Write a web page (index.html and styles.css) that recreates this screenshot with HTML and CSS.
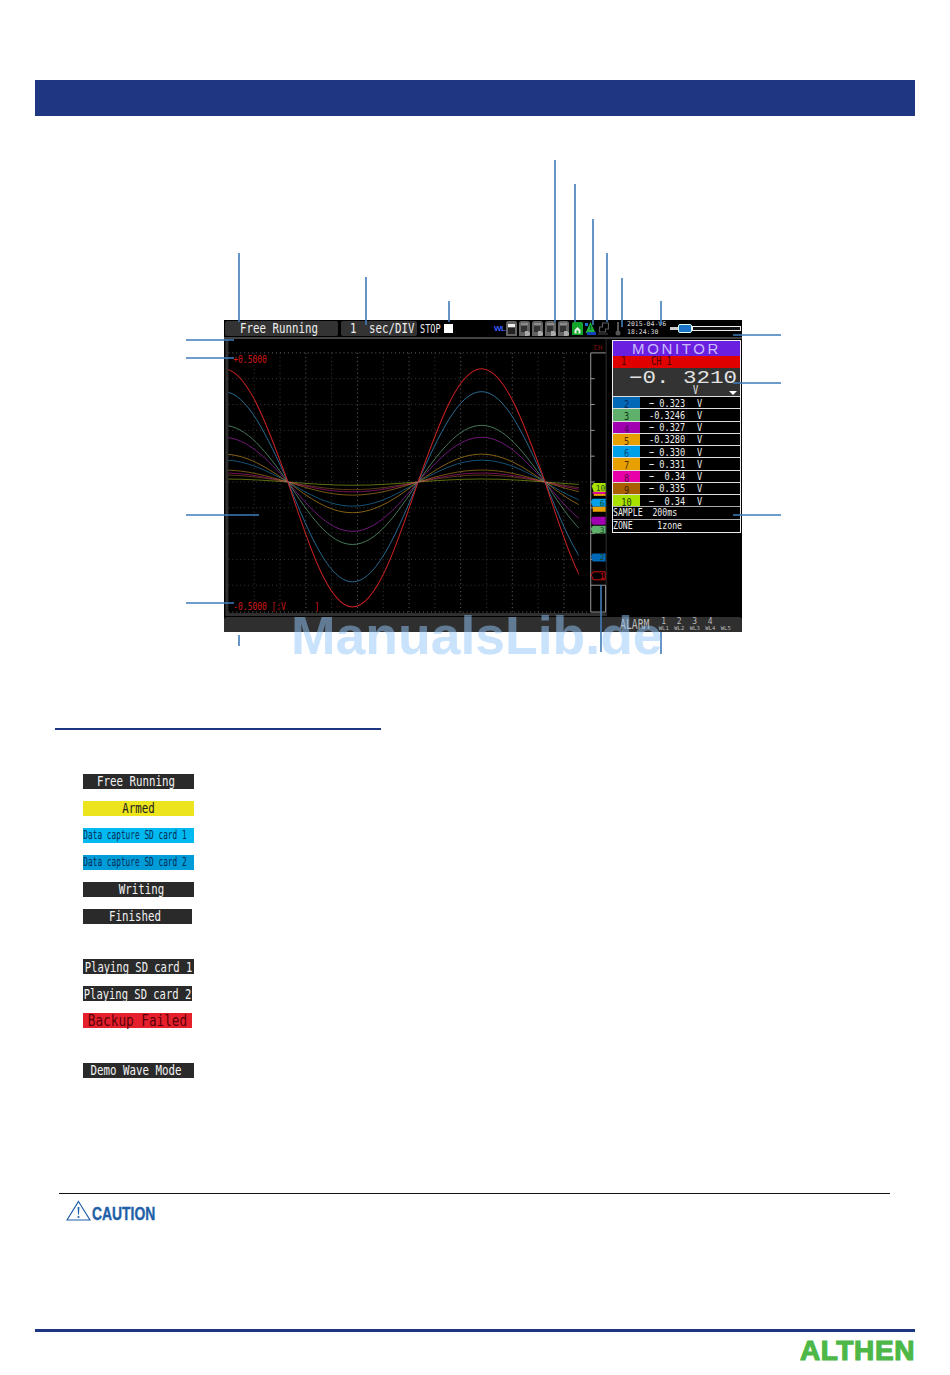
FILE: index.html
```html
<!DOCTYPE html>
<html lang="en">
<head>
<meta charset="utf-8">
<title>Monitor screen</title>
<link rel="stylesheet" href="styles.css">
</head>
<body>
<div class="page">
  <header class="title-bar"></header>

  <section class="figure">
    <div class="screen">
      <div class="topbar">
        <div class="pill pill-mode"><span class="lcd">Free Running</span></div>
        <div class="pill pill-div"><span class="lcd div-num">1</span><span class="lcd">sec/DIV</span></div>
        <span class="lcd stop">STOP</span>
        <span class="stop-box"></span>
        <div class="status">
          <span class="wl">WL</span>
          <svg class="ico" viewBox="0 0 11 15"><use href="#sd"/><rect x="2" y="3" width="7" height="3" fill="#eee"/><rect x="2" y="7" width="7" height="6" fill="#222"/></svg>
          <svg class="ico" viewBox="0 0 11 15"><use href="#sd"/><use href="#sd-mark"/></svg>
          <svg class="ico" viewBox="0 0 11 15"><use href="#sd"/><use href="#sd-mark"/></svg>
          <svg class="ico" viewBox="0 0 11 15"><use href="#sd"/><use href="#sd-mark"/></svg>
          <svg class="ico" viewBox="0 0 11 15"><use href="#sd"/><use href="#sd-mark"/></svg>
          <svg class="ico ico-gap" viewBox="0 0 11 15"><path d="M2 1h7q2 0 2 2v11H0V3q0-2 2-2z" fill="#12a52a"/><path d="M2.500 9l3-3 3 3v3.500h-6z" fill="#e8f5e8"/><rect x="4.500" y="9.500" width="2" height="3" fill="#12a52a"/></svg>
          <svg class="ico" viewBox="0 0 11 15"><rect x="0" y="2" width="3" height="3" fill="#1c6fd0"/><path d="M5.500 1L10.500 12H.5z" fill="#1fb83c"/><path d="M5.500 4v5" stroke="#063" stroke-width="1.500"/><rect x="2" y="11" width="9" height="3" fill="#1444b8"/></svg>
          <svg class="ico" viewBox="0 0 11 15"><path d="M4.500 2h6v6H7.500v3h-6V6h3z" fill="none" stroke="#5a5a5a" stroke-width="1.200"/><path d="M0 13h10" stroke="#4a4a4a"/></svg>
          <svg class="ico ico-therm" viewBox="0 0 8 15"><rect x="3" y="1" width="2" height="9" fill="#555"/><circle cx="4" cy="12" r="2.500" fill="#555"/></svg>
          <div class="clock"><span>2015-04-V6</span><span>18:24:30</span></div>
          <div class="slider"><span class="slider-tip"></span><span class="slider-knob"></span><span class="slider-track"></span></div>
        </div>
      </div>

      <div class="main">
        <svg class="chart" viewBox="224 337 384 280">
          <defs>
            <clipPath id="plot"><rect x="227" y="340" width="353" height="272"/></clipPath>
            <path id="wave" d="M222-100C245.500-100 265.800-51.230 287 0C308.200 56.600 328.500 110.500 352 110.500C375.900 110.500 396.500 56.600 418 0C438.900-51.230 458.800-100 482-100C505.200-100 525.100-51.230 546 0C567 56.600 587 110.500 611 110.500"/>
          </defs>
          <rect class="frame" x="224" y="337" width="3" height="277"/>
          <rect class="frame" x="224" y="613" width="384" height="3"/>
          <rect class="frame" x="607" y="337" width="1" height="279"/>
          <path class="grid" d="M227 377H591M227 403H591M227 429H591M227 455H591M227 481H591M227 507H591M227 533H591M227 559H591M227 585H591M253 351V612M279 351V612M331 351V612M383 351V612M435 351V612M487 351V612M539 351V612"/>
          <path class="grid-major" d="M227 351H591M227 612H591M305 351V612M357 351V612M409 351V612M461 351V612M513 351V612M565 351V612"/>
          <g class="waves" clip-path="url(#plot)">
            <use href="#wave" class="w10" transform="translate(0 481) scale(1 .03)"/>
            <use href="#wave" class="w9" transform="translate(0 481) scale(1 .07)"/>
            <use href="#wave" class="w8" transform="translate(0 481) scale(1 .09)"/>
            <use href="#wave" class="w7" transform="translate(0 481) scale(1 .12)"/>
            <use href="#wave" class="w6" transform="translate(0 481) scale(1 .22)"/>
            <use href="#wave" class="w5" transform="translate(0 481) scale(1 .28)"/>
            <use href="#wave" class="w4" transform="translate(0 481) scale(1 .45)"/>
            <use href="#wave" class="w3" transform="translate(0 481) scale(1 .57)"/>
            <use href="#wave" class="w2" transform="translate(0 481) scale(1 .91)"/>
            <use href="#wave" class="w1" transform="translate(0 481) scale(1 1.14)"/>
          </g>
          <text class="scale-text" transform="translate(232 361) scale(1 1.4)">+0.5000</text>
          <text class="scale-text" transform="translate(232 610) scale(1 1.4)">-0.5000 [:V      ]</text>
          <text class="ch-tag" x="595" y="348">CH</text>
          <path class="axis" d="M592 351V612H607M592 351H607M592 377H596M592 403H596M592 429H596M592 455H596M592 481H596M592 507H596M592 533H596M592 559H596M592 585H607V612"/>
          <path d="M593 485l2-3h12v9H595z" fill="#a8e000"/>
          <text class="tag-text" x="597" y="490">10</text>
          <rect x="594" y="491" width="13" height="2" fill="#e800a8"/>
          <rect x="595" y="493" width="12" height="2" fill="#e8a000"/>
          <path d="M592 501l2-3h13v8H594z" fill="#00a0e8"/>
          <text class="tag-text" x="601" y="505">6</text>
          <rect x="594" y="506" width="13" height="5" fill="#e8a000"/>
          <path d="M592 519l2-3h13v8H594z" fill="#a000b0"/>
          <path d="M592 528l2-3h13v8H594z" fill="#5fb06a"/>
          <text class="tag-text" x="601" y="532">3</text>
          <path d="M592 556l2-3h13v8H594z" fill="#0068b7"/>
          <text class="tag-text" x="601" y="560">2</text>
          <path d="M592.500 574.500l2-3h12v8h-12z" fill="none" stroke="#d01010"/>
          <text class="tag-red" x="601" y="579">1</text>
        </svg>

        <aside class="panel">
          <div class="monitor">MONITOR</div>
          <div class="ch-head"><span class="lcd ch-num">1</span><span class="lcd">CH 1</span></div>
          <div class="big">
            <div class="big-value">−0. 3210</div>
            <span class="lcd big-unit">V</span>
            <span class="big-arrow"></span>
          </div>
          <div class="row"><span class="cell c2"><span class="lcd">2</span></span><span class="lcd val">− 0.323</span><span class="lcd unit">V</span></div>
          <div class="row"><span class="cell c3"><span class="lcd">3</span></span><span class="lcd val">-0.3246</span><span class="lcd unit">V</span></div>
          <div class="row"><span class="cell c4"><span class="lcd">4</span></span><span class="lcd val">− 0.327</span><span class="lcd unit">V</span></div>
          <div class="row"><span class="cell c5"><span class="lcd">5</span></span><span class="lcd val">-0.3280</span><span class="lcd unit">V</span></div>
          <div class="row"><span class="cell c6"><span class="lcd">6</span></span><span class="lcd val">− 0.330</span><span class="lcd unit">V</span></div>
          <div class="row"><span class="cell c5"><span class="lcd">7</span></span><span class="lcd val">− 0.331</span><span class="lcd unit">V</span></div>
          <div class="row"><span class="cell c8"><span class="lcd">8</span></span><span class="lcd val">−  0.34</span><span class="lcd unit">V</span></div>
          <div class="row"><span class="cell c9"><span class="lcd">9</span></span><span class="lcd val">− 0.335</span><span class="lcd unit">V</span></div>
          <div class="row"><span class="cell c10"><span class="lcd">10</span></span><span class="lcd val">−  0.34</span><span class="lcd unit">V</span></div>
          <div class="info"><span class="lcd">SAMPLE  200ms</span></div>
          <div class="info"><span class="lcd">ZONE     1zone</span></div>
        </aside>
      </div>

      <div class="bottombar">
        <span class="lcd alarm">ALARM</span>
        <div class="al"><span>1</span><small>WL1</small></div>
        <div class="al"><span>2</span><small>WL2</small></div>
        <div class="al"><span>3</span><small>WL3</small></div>
        <div class="al"><span>4</span><small>WL4</small></div>
        <div class="al"><span>&nbsp;</span><small>WL5</small></div>
      </div>
    </div>
  </section>

  <div class="section-rule"></div>

  <section class="badges">
    <div class="group">
      <div class="badge dark"><span class="lcd shift-left">Free Running</span></div>
      <div class="badge yellow"><span class="lcd">Armed</span></div>
      <div class="badge cyan"><span class="lcd tiny">Data capture SD card 1</span></div>
      <div class="badge blue"><span class="lcd tiny">Data capture SD card 2</span></div>
      <div class="badge dark"><span class="lcd shift-right">Writing</span></div>
      <div class="badge dark short"><span class="lcd shift-left">Finished</span></div>
    </div>
    <div class="group">
      <div class="badge dark"><span class="lcd play">Playing SD card 1</span></div>
      <div class="badge dark short"><span class="lcd play">Playing SD card 2</span></div>
      <div class="badge red short"><span class="lcd wide">Backup Failed</span></div>
    </div>
    <div class="group">
      <div class="badge dark"><span class="lcd shift-left">Demo Wave Mode</span></div>
    </div>
  </section>

  <section class="caution">
    <svg class="caution-icon" viewBox="0 0 25 21">
      <path d="M12.500 1.500L24 20H1z" fill="none" stroke="#1f5fa8" stroke-width="1.200"/>
      <path d="M11.600 7h1.800l-.4 7.500h-1z" fill="#1f5fa8"/>
      <circle cx="12.500" cy="17" r="1.100" fill="#1f5fa8"/>
    </svg>
    <span class="caution-text">CAUTION</span>
  </section>

  <footer class="footer">
    <div class="footer-logo">ALTHEN</div>
  </footer>

  <svg class="callouts" viewBox="0 0 950 700">
    <path d="M239 253V322M366 277V325M449 301V322M555 160V322M575 184V322M593 219V325M607 253V322M622 278V327M661 301V325M239 635V646M601 585V652M661 632V654M186 340H234M186 358H234M186 515H259M186 603H234M733 335H781M733 383H781M733 515H781"/>
  </svg>

  <div class="watermark">ManualsLib.de</div>

  <svg class="defs-holder" aria-hidden="true">
    <defs>
      <path id="sd" d="M2.500 0h6q2.500 0 2.500 2.500V15H0V2.500Q0 0 2.500 0z" fill="#636363"/>
      <g id="sd-mark"><rect x="2" y="2" width="7" height="2" fill="#8c8c8c"/><rect x="2" y="5" width="6" height="6" fill="#333"/><path d="M6 10h3l2 2v2l-2 1H6z" fill="#aaa"/></g>
    </defs>
  </svg>
</div>
</body>
</html>
```

FILE: styles.css
```css
* { box-sizing: border-box; }

body {
  margin: 0;
  background: #fff;
  font-family: "Liberation Sans", Arial, sans-serif;
}

.page {
  position: relative;
  width: 950px;
  height: 1375px;
  padding: 80px 35px 0;
  overflow: hidden;
}

.title-bar {
  height: 36px;
  background: #1f3783;
}

/* LCD style text: a narrow mono face stretched vertically */
.lcd {
  display: inline-block;
  font-family: "DejaVu Sans Mono", monospace;
  font-size: 10.800px;
  line-height: 12px;
  white-space: pre;
  transform: scale(1, 1.35);
}

/* Figure */
.figure {
  height: 516px;
  padding: 204px 0 0 189px;
}

.screen {
  display: flex;
  flex-direction: column;
  width: 518px;
  height: 312px;
  background: #000;
  color: #eee;
}

.topbar {
  display: flex;
  align-items: center;
  height: 17px;
  padding-left: 1px;
}

.pill {
  display: flex;
  align-items: center;
  height: 15px;
  background: #333;
  border-radius: 2px;
}

.pill-mode { width: 113px; padding-left: 15px; }
.pill-div { width: 76px; margin-left: 3px; padding-left: 9px; }
.div-num { width: 19px; }

.stop {
  margin-left: 3px;
  font-size: 8.600px;
}

.stop-box {
  width: 9px;
  height: 9px;
  margin-left: 3px;
  background: #fff;
}

.status {
  display: flex;
  align-items: center;
  width: 248px;
  margin-left: auto;
}

.wl {
  width: 12px;
  color: #3a5cff;
  font-size: 8px;
  font-weight: bold;
  letter-spacing: -.5px;
}

.ico {
  flex: none;
  width: 11px;
  height: 15px;
  margin-right: 2px;
}

.ico-gap { margin-left: 1px; }
.ico-therm { width: 8px; margin: 0 5px 0 3px; }

.clock {
  display: flex;
  flex-direction: column;
  width: 43px;
  color: #ddd;
  font-family: "DejaVu Sans Mono", monospace;
  font-size: 6.500px;
  line-height: 7.500px;
}

.slider {
  display: flex;
  align-items: center;
  height: 9px;
}

.slider-tip {
  width: 8px;
  height: 3px;
  background: #ccc;
}

.slider-knob {
  width: 14px;
  height: 9px;
  background: #1c74c8;
  border: 1px solid #dfe;
  border-radius: 2px;
}

.slider-track {
  width: 49px;
  height: 5px;
  background: #111;
  border: 1px solid #eee;
}

.main {
  display: flex;
  flex: 1;
  min-height: 0;
  border-top: 2px solid #444;
}

.chart {
  flex: none;
  width: 384px;
  height: 278px;
}

.frame { fill: #303030; }
.grid { fill: none; stroke: #383838; stroke-dasharray: 1 3; }
.grid-major { fill: none; stroke: #666; stroke-dasharray: 1 3; }
.waves use { fill: none; stroke-width: 1; vector-effect: non-scaling-stroke; }
.waves .w1 { stroke: #c82020; }
.waves .w2 { stroke: #2a6f98; }
.waves .w3 { stroke: #5a9870; }
.waves .w4 { stroke: #9a20a8; }
.waves .w5 { stroke: #d09a20; }
.waves .w6 { stroke: #2088c0; }
.waves .w7 { stroke: #d49a20; }
.waves .w8 { stroke: #d8209a; }
.waves .w9 { stroke: #a86c30; }
.waves .w10 { stroke: #b8d820; }

.scale-text {
  fill: #d01818;
  font-family: "DejaVu Sans Mono", monospace;
  font-size: 8px;
  white-space: pre;
}

.ch-tag {
  fill: #8a1010;
  font-family: "DejaVu Sans Mono", monospace;
  font-size: 7px;
}

.axis { fill: none; stroke: #999; stroke-width: 1; }

.tag-text, .tag-red {
  font-family: "DejaVu Sans Mono", monospace;
  font-size: 8px;
  fill: #1a4a20;
}

.tag-red { fill: #d01010; }

/* Monitor panel */
.panel {
  flex: none;
  width: 129px;
  height: 193px;
  margin: 1px 0 0 4px;
  border: 1px solid #eee;
}

.monitor {
  height: 15px;
  background: #6a1fe0;
  color: #c9bcff;
  font-size: 15px;
  line-height: 15px;
  letter-spacing: 2.600px;
  text-align: center;
}

.ch-head {
  display: flex;
  height: 12px;
  padding-left: 8px;
  background: #e00000;
  color: #4a0000;
  line-height: 12px;
}

.ch-head .lcd { font-size: 8.600px; line-height: 11px; }
.ch-num { width: 30px; }

.big {
  position: relative;
  height: 28px;
  background: #333;
}

.big-value {
  display: inline-block;
  margin-left: 16px;
  color: #e2e2e2;
  font-family: "Liberation Mono", monospace;
  font-size: 18px;
  line-height: 21px;
  white-space: pre;
  transform: scaleX(1.25);
  transform-origin: left center;
}

.big-unit {
  position: absolute;
  left: 80px;
  top: 17px;
  font-size: 8.600px;
  line-height: 10px;
}

.big-arrow {
  position: absolute;
  right: 3px;
  bottom: 1px;
  border: 4px solid transparent;
  border-top-color: #fff;
  border-bottom-width: 0;
}

.row {
  display: flex;
  align-items: center;
  height: 12.250px;
  border-top: 1px solid #ddd;
}

.row .lcd, .info .lcd {
  font-size: 8.600px;
  line-height: 10px;
  transform: scale(1, 1.25);
}

.cell {
  width: 27px;
  height: 100%;
  color: #1c2a4a;
  line-height: 10px;
  text-align: center;
}

.val { width: 56px; padding-left: 9px; }
.unit { margin-left: 1px; }

.c2 { background: #0068b7; color: #042a5a; }
.c3 { background: #5fb06a; color: #0a3a10; }
.c4 { background: #a000b0; color: #500060; }
.c5 { background: #e8a000; color: #503000; }
.c6 { background: #00a0e8; color: #044a7a; }
.c8 { background: #e800a8; color: #60004a; }
.c9 { background: #a86000; color: #402000; }
.c10 { background: #a8e000; color: #204000; }

.info {
  display: flex;
  align-items: flex-start;
  height: 12.250px;
  border-top: 1px solid #aaa;
}

.info .lcd { font-size: 8.200px; }

/* Bottom bar */
.bottombar {
  display: flex;
  align-items: center;
  height: 15px;
  padding-left: 396px;
  background: #2f2f2f;
  border-radius: 3px 3px 0 0;
  color: #bbb;
}

.alarm { width: 36px; font-size: 9.800px; }

.al {
  display: flex;
  flex-direction: column;
  align-items: center;
  width: 15.500px;
  font-family: "DejaVu Sans Mono", monospace;
  font-size: 8px;
  line-height: 7px;
}

.al small { font-size: 5.500px; line-height: 7px; }

/* Section rule and status badges */
.section-rule {
  width: 326px;
  height: 2px;
  margin: 96px 0 0 20px;
  background: #1f3783;
}

.badges {
  display: flex;
  flex-direction: column;
  gap: 35px;
  margin: 44px 0 0 48px;
}

.group {
  display: flex;
  flex-direction: column;
  gap: 12px;
}

.badge {
  width: 111px;
  height: 15px;
  padding-top: 1px;
  color: #f2f2f2;
  text-align: center;
}

.badge .lcd { vertical-align: top; line-height: 14px; }

.short { width: 109px; }
.dark { background: #2a2a2a; }
.yellow { background: #ece41c; color: #222; }
.cyan { background: #00b9f0; color: #06365a; }
.blue { background: #009cd8; color: #06365a; }
.red { background: #e5202c; color: #5a0008; }

.lcd.shift-left { margin-right: 5px; }
.lcd.shift-right { margin-left: 6px; }

.lcd.tiny {
  font-size: 7.800px;
  color: #032a55;
  transform: scale(1, 1.6);
  margin-right: 7px;
}

.lcd.play { font-size: 10.500px; }
.lcd.wide { font-size: 12.700px; transform: scale(1, 1.2); }

/* Caution */
.caution {
  display: flex;
  align-items: flex-start;
  width: 831px;
  height: 136px;
  margin: 115px 0 0 24px;
  padding: 6px 0 0 7px;
  border-top: 1px solid #111;
}

.caution-icon {
  flex: none;
  width: 25px;
  height: 21px;
}

.caution-text {
  margin: 4px 0 0 1px;
  color: #1f5fa8;
  font-size: 19px;
  font-weight: bold;
  line-height: 19px;
  -webkit-text-stroke: .4px #1f5fa8;
  transform: scaleX(.73);
  transform-origin: left center;
}

/* Footer */
.footer {
  display: flex;
  flex-direction: column;
  align-items: flex-end;
  border-top: 3px solid #1f3783;
  padding-top: 6px;
}

.footer-logo {
  color: #4db848;
  font-size: 28px;
  font-weight: bold;
  line-height: 26px;
  letter-spacing: .6px;
  -webkit-text-stroke: 1.200px #4db848;
}

/* Overlays */
.callouts {
  position: absolute;
  left: 0;
  top: 0;
  width: 950px;
  height: 700px;
  fill: none;
  stroke: #3f7cba;
  stroke-width: 1.600;
  pointer-events: none;
}

.watermark {
  position: absolute;
  left: 291px;
  top: 609px;
  color: rgba(150, 200, 250, .5);
  font-size: 53.500px;
  font-weight: bold;
  line-height: 1;
  white-space: nowrap;
}

.defs-holder {
  position: absolute;
  width: 0;
  height: 0;
}
```
